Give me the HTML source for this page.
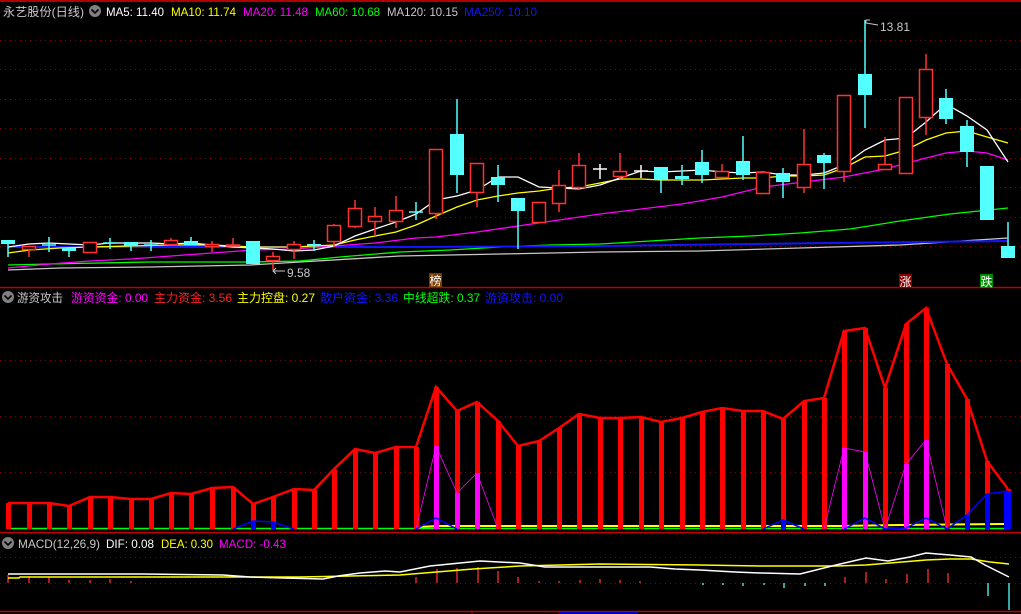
<!DOCTYPE html>
<html><head><meta charset="utf-8"><style>
html,body{margin:0;padding:0;background:#000;}
svg{display:block;}
text{font-family:"Liberation Sans","Noto Sans CJK SC",sans-serif;font-size:12px;}
</style></head><body>
<svg width="1021" height="614" viewBox="0 0 1021 614" xmlns="http://www.w3.org/2000/svg">
<rect width="1021" height="614" fill="#000"/>
<line x1="0" y1="1" x2="1021" y2="1" stroke="#b00000" stroke-width="2"/>
<g stroke="#8a0000" stroke-dasharray="1 4" stroke-width="1">
<line x1="0" y1="40.5" x2="1021" y2="40.5"/><line x1="0" y1="69.5" x2="1021" y2="69.5"/>
<line x1="0" y1="99.5" x2="1021" y2="99.5"/><line x1="0" y1="128.5" x2="1021" y2="128.5"/>
<line x1="0" y1="158.5" x2="1021" y2="158.5"/><line x1="0" y1="187.5" x2="1021" y2="187.5"/>
<line x1="0" y1="217.5" x2="1021" y2="217.5"/><line x1="0" y1="246.5" x2="1021" y2="246.5"/>
<line x1="0" y1="360.5" x2="1021" y2="360.5"/><line x1="0" y1="416.5" x2="1021" y2="416.5"/>
<line x1="0" y1="472.5" x2="1021" y2="472.5"/>
<line x1="0" y1="557.5" x2="1021" y2="557.5"/><line x1="0" y1="583.5" x2="1021" y2="583.5"/>
</g>
<line x1="0" y1="287.5" x2="1021" y2="287.5" stroke="#c00000" stroke-width="1.5"/>
<line x1="0" y1="532.5" x2="1021" y2="532.5" stroke="#c00000" stroke-width="1.5"/>
<line x1="0" y1="611.5" x2="1021" y2="611.5" stroke="#c00000" stroke-width="1.5"/>
<g stroke="#c00000"><line x1="472" y1="611" x2="472" y2="614"/><line x1="559" y1="611" x2="559" y2="614"/><line x1="637" y1="611" x2="637" y2="614"/></g>
<rect x="559" y="612" width="78" height="2" fill="#0000c0"/>

<!-- headers -->
<text x="3" y="16" fill="#c8c8c8" textLength="81" lengthAdjust="spacingAndGlyphs">永艺股份(日线)</text>
<circle cx="95" cy="11" r="6" fill="#808080"/><path d="M91.5 9.5 L95 13 L98.5 9.5" stroke="#000" stroke-width="1.6" fill="none"/>
<text x="106" y="16" fill="#fff" textLength="58" lengthAdjust="spacingAndGlyphs">MA5: 11.40</text>
<text x="171" y="16" fill="#ffff00" textLength="65" lengthAdjust="spacingAndGlyphs">MA10: 11.74</text>
<text x="243" y="16" fill="#ff00ff" textLength="65" lengthAdjust="spacingAndGlyphs">MA20: 11.48</text>
<text x="315" y="16" fill="#00ff00" textLength="65" lengthAdjust="spacingAndGlyphs">MA60: 10.68</text>
<text x="387" y="16" fill="#c8c8c8" textLength="71" lengthAdjust="spacingAndGlyphs">MA120: 10.15</text>
<text x="464" y="16" fill="#1414ff" textLength="73" lengthAdjust="spacingAndGlyphs">MA250: 10.10</text>

<circle cx="8" cy="297" r="6" fill="#808080"/><path d="M4.5 295.5 L8 299 L11.5 295.5" stroke="#000" stroke-width="1.6" fill="none"/>
<text x="17" y="302" fill="#c8c8c8" textLength="46" lengthAdjust="spacingAndGlyphs">游资攻击</text>
<text x="71" y="302" fill="#ff00ff" textLength="77" lengthAdjust="spacingAndGlyphs">游资资金: 0.00</text>
<text x="154" y="302" fill="#ff2020" textLength="78" lengthAdjust="spacingAndGlyphs">主力资金: 3.56</text>
<text x="237" y="302" fill="#ffff00" textLength="78" lengthAdjust="spacingAndGlyphs">主力控盘: 0.27</text>
<text x="320" y="302" fill="#1414ff" textLength="78" lengthAdjust="spacingAndGlyphs">散户资金: 3.36</text>
<text x="403" y="302" fill="#00ff00" textLength="77" lengthAdjust="spacingAndGlyphs">中线超跌: 0.37</text>
<text x="485" y="302" fill="#1414ff" textLength="78" lengthAdjust="spacingAndGlyphs">游资攻击: 0.00</text>

<circle cx="8" cy="543" r="6" fill="#808080"/><path d="M4.5 541.5 L8 545 L11.5 541.5" stroke="#000" stroke-width="1.6" fill="none"/>
<text x="18" y="548" fill="#c8c8c8" textLength="82" lengthAdjust="spacingAndGlyphs">MACD(12,26,9)</text>
<text x="106" y="548" fill="#fff" textLength="48" lengthAdjust="spacingAndGlyphs">DIF: 0.08</text>
<text x="161" y="548" fill="#ffff00" textLength="52" lengthAdjust="spacingAndGlyphs">DEA: 0.30</text>
<text x="219" y="548" fill="#ff00ff" textLength="67" lengthAdjust="spacingAndGlyphs">MACD: -0.43</text>

<!-- MA lines -->
<g fill="none" stroke-width="1.3">
<polyline stroke="#c8c8c8" points="8,270 60,268 150,267 250,265 300,262 400,256 500,254 600,252 700,251 800,248 900,245 1008,238"/>
<polyline stroke="#00ff00" points="8,265 50,264 100,263 150,262 250,262 300,261 340,257 400,252 450,250 500,247 550,245 600,244 650,241 700,238 750,236 800,233 850,229 900,221 950,214 1008,208"/>
<polyline stroke="#1414ff" stroke-width="2" points="8,247 400,247 600,246 830,243 1008,241"/>
<polyline stroke="#ff00ff" points="8,268 50,264 90,261 131,259 171,256 212,253 253,250 294,249 334,246 375,243 416,238 436,237 477,232 518,226 559,220 600,214 641,209 682,204 722,197 763,187 804,182 844,177 885,169 926,158 946,153 967,151 987,153 1008,160"/>
<polyline stroke="#ffff00" points="8,253 30,250 60,248 90,247 131,246 171,245 212,245 233,246 253,247 294,247 334,245 355,240 375,236 396,232 416,225 436,216 457,207 477,200 498,196 518,193 539,191 559,188 579,187 600,183 620,179 641,179 661,180 682,180 702,180 722,179 743,178 763,178 783,176 804,176 824,175 844,168 865,157 885,156 906,150 926,140 946,133 967,131 987,137 1008,143"/>
<polyline stroke="#ffffff" points="8,247 29,244 49,243 69,244 90,245 110,243 131,243 151,243 171,244 191,243 212,245 233,247 253,248 273,249 294,251 314,250 334,246 355,236 375,229 396,222 416,214 436,200 457,196 477,190 498,177 518,177 539,187 559,188 579,189 600,185 620,178 641,171 661,172 682,171 702,170 722,172 743,173 763,172 783,175 804,175 824,173 844,165 865,150 885,140 906,138 926,122 946,104 967,116 987,130 1008,162"/>
</g>

<!-- candles: cyan -->
<g stroke="#54ffff" stroke-width="1.5">
<line x1="8" y1="240" x2="8" y2="257"/><line x1="49" y1="237" x2="49" y2="252"/><line x1="69" y1="248" x2="69" y2="257"/>
<line x1="110" y1="238" x2="110" y2="249"/><line x1="131" y1="242" x2="131" y2="251"/><line x1="151" y1="240" x2="151" y2="251"/>
<line x1="191" y1="237" x2="191" y2="245"/><line x1="314" y1="240" x2="314" y2="251"/><line x1="416" y1="202" x2="416" y2="220"/>
<line x1="457" y1="99" x2="457" y2="193"/><line x1="498" y1="165" x2="498" y2="202"/><line x1="518" y1="198" x2="518" y2="249"/>
<line x1="661" y1="167" x2="661" y2="193"/><line x1="682" y1="165" x2="682" y2="185"/><line x1="702" y1="150" x2="702" y2="183"/>
<line x1="743" y1="136" x2="743" y2="180"/><line x1="783" y1="168" x2="783" y2="198"/><line x1="824" y1="153" x2="824" y2="189"/>
<line x1="865" y1="20" x2="865" y2="128"/><line x1="946" y1="89" x2="946" y2="124"/><line x1="967" y1="120" x2="967" y2="167"/>
<line x1="1008" y1="222" x2="1008" y2="258"/>
<line x1="42" y1="245" x2="56" y2="245"/><line x1="103" y1="243" x2="117" y2="243"/><line x1="144" y1="245" x2="158" y2="245"/><line x1="409" y1="212" x2="423" y2="212"/>
</g>
<g fill="#54ffff">
<rect x="1" y="240" width="14" height="4"/><rect x="62" y="248" width="14" height="3"/><rect x="124" y="242" width="14" height="4"/>
<rect x="184" y="241" width="14" height="4"/><rect x="246" y="241" width="14" height="23"/><rect x="307" y="244" width="14" height="2"/>
<rect x="450" y="134" width="14" height="41"/><rect x="491" y="177" width="14" height="8"/><rect x="511" y="198" width="14" height="13"/>
<rect x="654" y="167" width="14" height="13"/><rect x="675" y="176" width="14" height="3"/><rect x="695" y="162" width="14" height="13"/>
<rect x="736" y="161" width="14" height="14"/><rect x="776" y="173" width="14" height="9"/><rect x="817" y="155" width="14" height="8"/>
<rect x="858" y="74" width="14" height="21"/><rect x="939" y="98" width="14" height="21"/><rect x="960" y="126" width="14" height="26"/>
<rect x="980" y="166" width="14" height="54"/><rect x="1001" y="246" width="14" height="12"/>
</g>
<!-- white crosses -->
<g stroke="#fff" stroke-width="1.5">
<line x1="600" y1="164" x2="600" y2="179"/><line x1="593" y1="169" x2="607" y2="169"/>
<line x1="641" y1="165" x2="641" y2="178"/><line x1="634" y1="171" x2="648" y2="171"/>
</g>
<!-- red -->
<g stroke="#ff3232" stroke-width="1.5" fill="#000">
<line x1="29" y1="246" x2="29" y2="257"/><line x1="90" y1="242" x2="90" y2="253"/><line x1="171" y1="238" x2="171" y2="244"/>
<line x1="212" y1="241" x2="212" y2="252"/><line x1="233" y1="238" x2="233" y2="246"/><line x1="273" y1="252" x2="273" y2="270"/>
<line x1="294" y1="241" x2="294" y2="259"/><line x1="334" y1="224" x2="334" y2="247"/><line x1="355" y1="200" x2="355" y2="228"/>
<line x1="375" y1="207" x2="375" y2="236"/><line x1="396" y1="196" x2="396" y2="228"/><line x1="436" y1="149" x2="436" y2="219"/>
<line x1="477" y1="163" x2="477" y2="207"/><line x1="559" y1="170" x2="559" y2="212"/><line x1="579" y1="153" x2="579" y2="190"/>
<line x1="620" y1="153" x2="620" y2="179"/><line x1="722" y1="164" x2="722" y2="177"/><line x1="804" y1="129" x2="804" y2="193"/>
<line x1="844" y1="95" x2="844" y2="182"/><line x1="885" y1="137" x2="885" y2="169"/><line x1="926" y1="54" x2="926" y2="135"/>
<rect x="22.5" y="246.5" width="13" height="3"/><rect x="83.5" y="242.5" width="13" height="10"/><rect x="164.5" y="240.5" width="13" height="4"/>
<rect x="205.5" y="244.5" width="13" height="2"/><rect x="226.5" y="245" width="13" height="1"/><rect x="266.5" y="256.5" width="13" height="4"/>
<rect x="287.5" y="244.5" width="13" height="5"/><rect x="327.5" y="225.5" width="13" height="16"/><rect x="348.5" y="208.5" width="13" height="18"/>
<rect x="368.5" y="216.5" width="13" height="5"/><rect x="389.5" y="210.5" width="13" height="11"/><rect x="429.5" y="149.5" width="13" height="64"/>
<rect x="470.5" y="163.5" width="13" height="29"/><rect x="532.5" y="202.5" width="13" height="20"/><rect x="552.5" y="185.5" width="13" height="18"/>
<rect x="572.5" y="165.5" width="13" height="22"/><rect x="613.5" y="171.5" width="13" height="5"/><rect x="715.5" y="171.5" width="13" height="6"/>
<rect x="756.5" y="172.5" width="13" height="21"/><rect x="797.5" y="164.5" width="13" height="23"/><rect x="837.5" y="95.5" width="13" height="76"/>
<rect x="878.5" y="164.5" width="13" height="5"/><rect x="899.5" y="97.5" width="13" height="76"/><rect x="919.5" y="69.5" width="13" height="48"/>
</g>
<!-- labels -->
<path d="M866 20 L866 23 L878 25" stroke="#c8c8c8" fill="none"/><path d="M866 20 L870 20" stroke="#c8c8c8"/>
<text x="880" y="31" fill="#c8c8c8" font-size="12">13.81</text>
<path d="M273 271 L285 271 M276 268 L273 271 L276 274" stroke="#c8c8c8" fill="none"/>
<text x="287" y="277" fill="#c8c8c8">9.58</text>
<rect x="429" y="273" width="13" height="14" fill="#7a3a00"/><text x="429.5" y="285" fill="#fff" font-size="12">榜</text>
<rect x="899" y="274" width="13" height="14" fill="#8a0000"/><text x="899.5" y="286" fill="#fff" font-size="12">涨</text>
<rect x="980" y="274" width="13" height="14" fill="#008a00"/><text x="980.5" y="286" fill="#fff" font-size="12">跌</text>

<!-- middle panel -->
<line x1="8" y1="528.5" x2="1010" y2="528.5" stroke="#00ff00" stroke-width="1.5"/>
<polyline fill="none" stroke="#ffff00" stroke-width="2" points="416,527 440,526 500,526 700,526 840,526 900,525 1000,524 1010,524"/>
<g fill="#ff0000">
<rect x="6" y="503" width="5" height="26"/><rect x="27" y="503" width="5" height="26"/><rect x="47" y="503" width="5" height="26"/>
<rect x="67" y="506" width="5" height="23"/><rect x="88" y="497" width="5" height="32"/><rect x="108" y="497" width="5" height="32"/>
<rect x="129" y="499" width="5" height="30"/><rect x="149" y="499" width="5" height="30"/><rect x="169" y="493" width="5" height="36"/>
<rect x="189" y="494" width="5" height="35"/><rect x="210" y="488" width="5" height="41"/><rect x="231" y="487" width="5" height="42"/>
<rect x="251" y="504" width="5" height="25"/><rect x="271" y="497" width="5" height="32"/><rect x="292" y="489" width="5" height="40"/>
<rect x="312" y="490" width="5" height="39"/><rect x="332" y="469" width="5" height="60"/><rect x="353" y="449" width="5" height="80"/>
<rect x="373" y="453" width="5" height="76"/><rect x="394" y="447" width="5" height="82"/><rect x="414" y="447" width="5" height="82"/>
<rect x="434" y="387" width="5" height="142"/><rect x="455" y="411" width="5" height="118"/><rect x="475" y="402" width="5" height="127"/>
<rect x="496" y="421" width="5" height="108"/><rect x="516" y="446" width="5" height="83"/><rect x="537" y="441" width="5" height="88"/>
<rect x="557" y="428" width="5" height="101"/><rect x="577" y="414" width="5" height="115"/><rect x="598" y="418" width="5" height="111"/>
<rect x="618" y="418" width="5" height="111"/><rect x="639" y="417" width="5" height="112"/><rect x="659" y="422" width="5" height="107"/>
<rect x="680" y="418" width="5" height="111"/><rect x="700" y="412" width="5" height="117"/><rect x="720" y="408" width="5" height="121"/>
<rect x="741" y="411" width="5" height="118"/><rect x="761" y="411" width="5" height="118"/><rect x="781" y="419" width="5" height="110"/>
<rect x="802" y="401" width="5" height="128"/><rect x="822" y="398" width="5" height="131"/><rect x="842" y="331" width="5" height="198"/>
<rect x="863" y="328" width="5" height="201"/><rect x="883" y="388" width="5" height="141"/><rect x="904" y="324" width="5" height="205"/>
<rect x="924" y="308" width="5" height="221"/><rect x="945" y="364" width="5" height="165"/><rect x="965" y="399" width="5" height="130"/>
<rect x="985" y="461" width="5" height="68"/><rect x="1006" y="489" width="5" height="40"/>
</g>
<polyline fill="none" stroke="#ff0000" stroke-width="2.5" points="8,503 29,503 49,503 69,506 90,497 110,497 131,499 151,499 171,493 191,494 212,488 233,487 253,504 273,497 294,489 314,490 334,469 355,449 375,453 396,447 416,447 436,387 457,411 477,402 498,421 518,446 539,441 559,428 579,414 600,418 620,418 641,417 661,422 682,418 702,412 722,408 743,411 763,411 783,419 804,401 824,398 844,331 865,328 885,388 906,324 926,308 947,364 967,399 987,461 1008,489"/>
<g fill="#ff00ff">
<rect x="434" y="446" width="5" height="83"/><rect x="455" y="493" width="5" height="36"/><rect x="475" y="473" width="5" height="56"/>
<rect x="842" y="448" width="5" height="81"/><rect x="863" y="452" width="5" height="77"/><rect x="904" y="464" width="5" height="65"/><rect x="924" y="440" width="5" height="89"/>
</g>
<polyline fill="none" stroke="#ff00ff" stroke-width="0.8" points="416,529 436,446 457,493 477,473 498,529"/>
<polyline fill="none" stroke="#ff00ff" stroke-width="0.8" points="824,529 844,448 865,452 885,529 906,464 926,440 947,529"/>
<g fill="#0000ff">
<rect x="251" y="521" width="5" height="8"/><rect x="271" y="522" width="5" height="7"/>
<rect x="965" y="515" width="5" height="14"/><rect x="985" y="494" width="5" height="35"/><rect x="1004" y="491" width="7" height="38"/>
<rect x="781" y="521" width="5" height="8"/>
</g>
<g fill="none" stroke="#0000ff" stroke-width="1.5">
<polyline points="233,529 253,521 273,522 294,529"/>
<polyline points="416,529 436,518 457,529"/>
<polyline points="763,529 783,520 804,529"/>
<polyline points="844,529 865,518 885,529 906,528 926,518 947,529 967,515 987,494 1008,491"/>
</g>

<!-- MACD -->
<g stroke="#ff3030" stroke-width="1.3">
<line x1="8" y1="575" x2="8" y2="583"/><line x1="29" y1="577" x2="29" y2="583"/><line x1="49" y1="577" x2="49" y2="583"/>
<line x1="69" y1="580" x2="69" y2="583"/><line x1="90" y1="580" x2="90" y2="583"/><line x1="110" y1="579" x2="110" y2="583"/>
<line x1="131" y1="581" x2="131" y2="583"/><line x1="416" y1="577" x2="416" y2="583"/><line x1="437" y1="569" x2="437" y2="583"/>
<line x1="457" y1="568" x2="457" y2="583"/><line x1="478" y1="567" x2="478" y2="583"/><line x1="498" y1="571" x2="498" y2="583"/>
<line x1="518" y1="577" x2="518" y2="583"/><line x1="539" y1="581" x2="539" y2="583"/><line x1="559" y1="581" x2="559" y2="583"/>
<line x1="580" y1="580" x2="580" y2="583"/><line x1="600" y1="579" x2="600" y2="583"/><line x1="620" y1="580" x2="620" y2="583"/>
<line x1="640" y1="581" x2="640" y2="583"/><line x1="845" y1="577" x2="845" y2="583"/><line x1="866" y1="572" x2="866" y2="583"/>
<line x1="886" y1="579" x2="886" y2="583"/><line x1="907" y1="574" x2="907" y2="583"/><line x1="928" y1="569" x2="928" y2="583"/>
<line x1="948" y1="573" x2="948" y2="583"/>
</g>
<g stroke="#54ffff" stroke-width="1.3">
<line x1="703" y1="583" x2="703" y2="585"/><line x1="723" y1="583" x2="723" y2="585"/><line x1="743" y1="583" x2="743" y2="586"/>
<line x1="764" y1="583" x2="764" y2="585"/><line x1="784" y1="583" x2="784" y2="588"/><line x1="805" y1="583" x2="805" y2="586"/>
<line x1="825" y1="583" x2="825" y2="586"/><line x1="988" y1="583" x2="988" y2="596"/><line x1="1009" y1="583" x2="1009" y2="610"/>
</g>
<polyline fill="none" stroke="#ffff00" stroke-width="1.5" points="8,578 19,578 20,577 142,577 300,577 400,575 473,569 520,566 600,564 700,565 760,566 836,566 866,565 890,563 926,560 950,559 971,559 990,562 1009,564"/>
<polyline fill="none" stroke="#ffffff" stroke-width="1.5" points="8,574 142,574 223,575 250,577 283,578 323,579 338,576 360,573 385,571 400,572 430,566 460,563 480,561 520,563 545,567 600,567 650,567 675,569 700,570 735,572 760,573 800,574 836,565 866,558 888,561 910,557 926,553 950,555 971,557 985,565 1009,577"/>
</svg>
</body></html>
